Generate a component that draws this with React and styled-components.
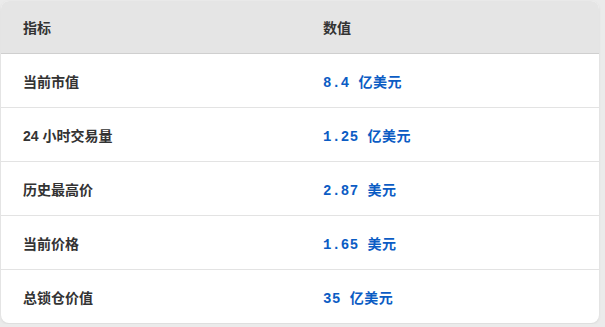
import styled, { createGlobalStyle } from "styled-components";

const GlobalStyle = createGlobalStyle`
  html, body {
    margin: 0;
    padding: 0;
    background: #ebebeb;
  }
`;

const Page = styled.div`
  padding: 1px;
`;

const Card = styled.div`
  width: 598px;
  background: #fff;
  border-radius: 8px;
  overflow: hidden;
  box-shadow: 0 1px 3px rgba(0, 0, 0, 0.08);
`;

const Table = styled.table`
  width: 100%;
  border-collapse: collapse;
  table-layout: fixed;
  font-family: "Liberation Sans", "Noto Sans CJK SC", sans-serif;
  font-size: 14px;
  color: #333;
`;

const HeadCell = styled.th`
  height: 52px;
  padding: 0 22px;
  text-align: left;
  font-weight: 600;
  background: #e5e5e5;
  border-bottom: 1px solid #cfcfcf;
  &:last-child {
    padding-left: 23px;
  }
`;

const Row = styled.tr`
  border-bottom: 1px solid #e3e3e3;
  &:last-child {
    border-bottom: none;
  }
`;

const Cell = styled.td`
  height: 53px;
  padding: 0 22px;
  font-weight: ${(p) => (p.$value ? 700 : 600)};
  color: ${(p) => (p.$value ? "#0b5cc4" : "#333")};
  letter-spacing: ${(p) => (p.$value ? "0.5px" : "0")};
  padding-left: ${(p) => (p.$value ? "23px" : "22px")};
  font-family: ${(p) =>
    p.$value
      ? `"Liberation Mono", "Noto Sans CJK SC", monospace`
      : `"Liberation Sans", "Noto Sans CJK SC", sans-serif`};
`;

const rows = [
  ["当前市值", "8.4 亿美元"],
  ["24 小时交易量", "1.25 亿美元"],
  ["历史最高价", "2.87 美元"],
  ["当前价格", "1.65 美元"],
  ["总锁仓价值", "35 亿美元"],
];

export default function App() {
  return (
    <>
      <GlobalStyle />
      <Page>
        <Card>
          <Table>
            <thead>
              <tr>
                <HeadCell>指标</HeadCell>
                <HeadCell>数值</HeadCell>
              </tr>
            </thead>
            <tbody>
              {rows.map(([label, value]) => (
                <Row key={label}>
                  <Cell>{label}</Cell>
                  <Cell $value>{value}</Cell>
                </Row>
              ))}
            </tbody>
          </Table>
        </Card>
      </Page>
    </>
  );
}
